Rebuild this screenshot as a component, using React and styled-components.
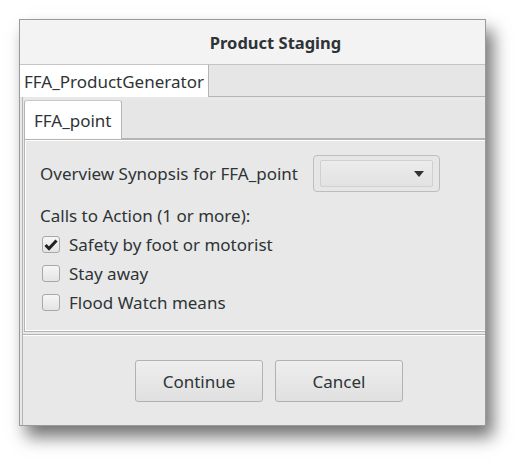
import React from 'react';
import styled, { createGlobalStyle } from 'styled-components';

const GlobalStyle = createGlobalStyle`
  body {
    margin: 0;
    background: #ffffff;
    font-family: "Noto Sans", "Open Sans", sans-serif;
    color: #2e3436;
  }
`;

const Page = styled.div`
  width: 529px;
  height: 469px;
  padding: 19px 0 0 19px;
  box-sizing: border-box;
`;

const Window = styled.div`
  width: 467px;
  height: 407px;
  box-sizing: border-box;
  border: 1px solid #9a9a9a;
  background: #e8e8e8;
  display: flex;
  flex-direction: column;
  box-shadow: 7px 11px 16px rgba(0, 0, 0, 0.55);
`;

const TitleBar = styled.div`
  height: 44px;
  flex-shrink: 0;
  background: #f3f3f3;
  border-bottom: 1px solid #c4c4c4;
  display: flex;
  align-items: center;
  justify-content: center;
  padding-left: 46px;
  font-size: 16.5px;
  font-weight: bold;
`;

const TabBar = styled.div`
  display: flex;
  height: ${p => p.h}px;
  flex-shrink: 0;
  background: #e6e6e6;
  border-bottom: 1px solid #b4b4b4;
  box-sizing: border-box;
  margin-top: ${p => p.top || 0}px;
`;

const Tab = styled.div`
  background: #ffffff;
  display: flex;
  align-items: center;
  padding: 0 ${p => p.pad}px;
  font-size: 17px;
  border-right: 1px solid #b4b4b4;
  border-left: ${p => (p.left ? '1px solid #b4b4b4' : 'none')};
  border-top: ${p => (p.left ? '1px solid #c8c8c8' : 'none')};
  border-radius: ${p => (p.left ? '3px 3px 0 0' : '0')};
  margin-bottom: -1px;
`;

const OuterPage = styled.div`
  flex: 1;
  display: flex;
  flex-direction: column;
  border-left: 1px solid #b4b4b4;
  margin-left: 2px;
`;

const Notebook = styled.div`
  display: flex;
  flex-direction: column;
  padding-left: 1px;
`;

const Panel = styled.div`
  height: 193px;
  box-sizing: border-box;
  border: 1px solid #b4b4b4;
  border-right: none;
  box-shadow: inset 1px 1px 0 #ffffff, inset 0 -1px 0 #ffffff;
  padding: 15px 0 0 15px;
  display: flex;
  flex-direction: column;
  font-size: 17px;
`;

const Row = styled.div`
  display: flex;
  align-items: center;
  gap: 15px;
`;

const Combo = styled.div`
  width: 127px;
  height: 37px;
  box-sizing: border-box;
  border: 1px solid #bdbdbd;
  border-radius: 4px;
  background: #e6e6e6;
  padding: 4px 6px;
  display: flex;
`;

const ComboInner = styled.div`
  flex: 1;
  border: 1px solid #d0d0d0;
  border-radius: 2px;
  background: linear-gradient(#ececec, #e2e2e2);
  display: flex;
  align-items: center;
  justify-content: flex-end;
  padding-right: 8px;
`;

const Arrow = styled.div`
  width: 0;
  height: 0;
  border-left: 5px solid transparent;
  border-right: 5px solid transparent;
  border-top: 6px solid #2e3436;
`;

const Heading = styled.div`
  line-height: 20px;
  margin: 14px 0 4px;
`;

const CheckRow = styled.label`
  display: flex;
  align-items: center;
  gap: 9px;
  height: 29px;
  padding-left: 2px;
`;

const Box = styled.span`
  width: 18px;
  height: 17px;
  box-sizing: border-box;
  border: 1px solid #a8a8a8;
  border-radius: 3px;
  background: linear-gradient(#f6f6f6, #e4e4e4);
  display: flex;
  align-items: center;
  justify-content: center;
`;

const ButtonBar = styled.div`
  flex: 1;
  display: flex;
  justify-content: center;
  align-items: flex-start;
  gap: 12px;
  padding: 25px 0 0 30px;
  border-top: 1px solid #b4b4b4;
  box-shadow: inset 0 1px 0 #ffffff;
  margin-top: 2px;
`;

const Button = styled.button`
  width: 128px;
  height: 42px;
  border: 1px solid #b2b2b2;
  border-radius: 3px;
  background: linear-gradient(#eeeeee, #e0e0e0);
  font-family: "Noto Sans", "Open Sans", sans-serif;
  font-size: 17px;
  color: #2e3436;
`;

const Check = () => (
  <svg width="14" height="12" viewBox="0 0 14 12">
    <path d="M1.5 6 L5 9.5 L12.5 1.5" fill="none" stroke="#1e2224" strokeWidth="3" />
  </svg>
);

const actions = [
  { label: 'Safety by foot or motorist', checked: true },
  { label: 'Stay away', checked: false },
  { label: 'Flood Watch means', checked: false }
];

const App = () => (
  <Page>
    <GlobalStyle />
    <Window>
      <TitleBar>Product Staging</TitleBar>
      <TabBar h={32}>
        <Tab pad={4}>FFA_ProductGenerator</Tab>
      </TabBar>
      <OuterPage>
        <Notebook>
          <TabBar h={39} top={3}>
            <Tab pad={9} left>FFA_point</Tab>
          </TabBar>
          <Panel>
            <Row>
              <span>Overview Synopsis for FFA_point</span>
              <Combo>
                <ComboInner>
                  <Arrow />
                </ComboInner>
              </Combo>
            </Row>
            <Heading>Calls to Action (1 or more):</Heading>
            {actions.map(a => (
              <CheckRow key={a.label}>
                <Box>{a.checked && <Check />}</Box>
                {a.label}
              </CheckRow>
            ))}
          </Panel>
        </Notebook>
        <ButtonBar>
          <Button>Continue</Button>
          <Button>Cancel</Button>
        </ButtonBar>
      </OuterPage>
    </Window>
  </Page>
);

export default App;
